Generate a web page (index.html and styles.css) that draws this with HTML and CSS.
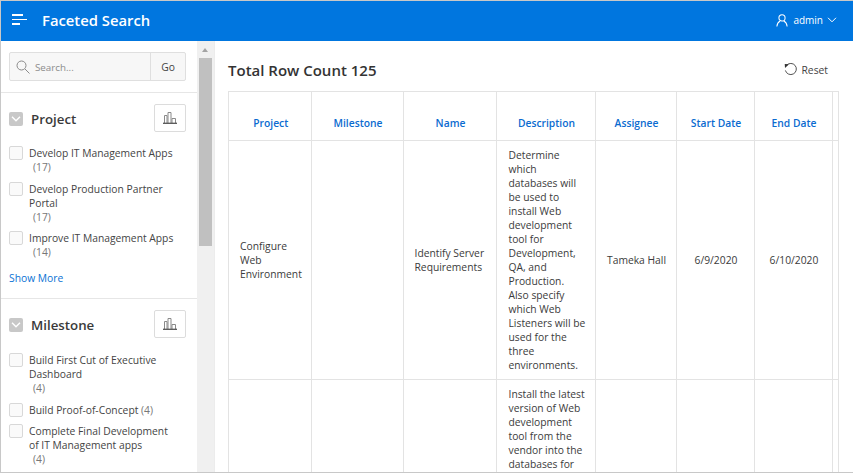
FILE: index.html
```html
<!DOCTYPE html>
<html lang="en">
<head>
<meta charset="utf-8">
<title>Faceted Search</title>
<link rel="stylesheet" href="styles.css">
</head>
<body>
<div class="frame">
  <header class="topbar">
    <svg class="menu-icon" width="16" height="12" viewBox="0 0 16 12" fill="none" stroke="#fff"><path d="M0 1h11M0 10h8" stroke-width="2"/><path d="M0 5.500h15" stroke-width="1"/></svg>
    <div class="app-title">Faceted Search</div>
    <div class="user">
      <svg width="12" height="13" viewBox="0 0 14 15" fill="none" stroke="#fff" stroke-width="1.200"><circle cx="7" cy="4.500" r="3.600"/><path d="M1 14.500c.3-3.500 2-5.500 3.800-6.400M13 14.500c-.3-3.500-2-5.500-3.800-6.400"/></svg>
      <span class="user-name">admin</span>
      <svg width="10" height="6" viewBox="0 0 10 6" fill="none" stroke="#fff" stroke-width="1"><path d="M1 .8l4 4 4-4"/></svg>
    </div>
  </header>
  <div class="body">
    <aside class="sidebar">
      <div class="search-wrap">
        <div class="search">
          <div class="search-field">
            <svg width="14" height="14" viewBox="0 0 14 14" fill="none" stroke="#8a8a8a" stroke-width="1"><circle cx="5.500" cy="5.500" r="4.500"/><path d="M9 9l4.500 4.500"/></svg>
            <span class="placeholder">Search...</span>
          </div>
          <div class="go">Go</div>
        </div>
      </div>
      <section class="facet">
        <div class="facet-head">
          <span class="collapse"><svg width="10" height="6" viewBox="0 0 10 6" fill="none" stroke="#fff" stroke-width="1.400"><path d="M1 .8l4 4 4-4"/></svg></span>
          <h2 class="facet-title">Project</h2>
          <span class="chart-btn"><svg width="14" height="12" viewBox="0 0 14 12" fill="none" stroke="#8a8a8a" stroke-width="1"><path d="M1.500 11V3.500h2.500V11M5 11V.5h3V11M9 11V6.500h3.500V11"/><path d="M0 11.300h14" stroke="#555" stroke-width="1.300"/></svg></span>
        </div>
        <ul class="options">
          <li class="option"><span class="box"></span><span class="label">Develop IT Management Apps <span class="count">(17)</span></span></li>
          <li class="option"><span class="box"></span><span class="label">Develop Production Partner Portal <span class="count">(17)</span></span></li>
          <li class="option"><span class="box"></span><span class="label">Improve IT Management Apps <span class="count">(14)</span></span></li>
        </ul>
        <a class="more">Show More</a>
      </section>
      <section class="facet">
        <div class="facet-head">
          <span class="collapse"><svg width="10" height="6" viewBox="0 0 10 6" fill="none" stroke="#fff" stroke-width="1.400"><path d="M1 .8l4 4 4-4"/></svg></span>
          <h2 class="facet-title">Milestone</h2>
          <span class="chart-btn"><svg width="14" height="12" viewBox="0 0 14 12" fill="none" stroke="#8a8a8a" stroke-width="1"><path d="M1.500 11V3.500h2.500V11M5 11V.5h3V11M9 11V6.500h3.500V11"/><path d="M0 11.300h14" stroke="#555" stroke-width="1.300"/></svg></span>
        </div>
        <ul class="options">
          <li class="option"><span class="box"></span><span class="label">Build First Cut of Executive Dashboard <span class="count">(4)</span></span></li>
          <li class="option"><span class="box"></span><span class="label">Build Proof-of-Concept <span class="count inline">(4)</span></span></li>
          <li class="option"><span class="box"></span><span class="label">Complete Final Development of IT Management apps <span class="count">(4)</span></span></li>
        </ul>
      </section>
    </aside>
    <div class="scrollbar">
      <div class="arrow"></div>
      <div class="thumb"></div>
    </div>
    <main class="main">
      <div class="main-head">
        <h1 class="total">Total Row Count 125</h1>
        <div class="reset">
          <svg width="13" height="13" viewBox="0 0 14 14" fill="none" stroke="#444" stroke-width="1"><path d="M2.700 2.600A6 6 0 1 1 1.500 8"/><path d="M.8 1.200l4.500 .2-4.200 4z" fill="#333" stroke="none"/></svg>
          <span>Reset</span>
        </div>
      </div>
      <div class="table-wrap">
        <table class="report">
          <colgroup>
            <col class="c1"><col class="c2"><col class="c3"><col class="c4"><col class="c5"><col class="c6"><col class="c7"><col class="c8">
          </colgroup>
          <thead>
            <tr><th>Project</th><th>Milestone</th><th>Name</th><th>Description</th><th>Assignee</th><th>Start Date</th><th>End Date</th><th></th></tr>
          </thead>
          <tbody>
            <tr>
              <td>Configure Web Environment</td>
              <td></td>
              <td>Identify Server Requirements</td>
              <td class="desc">Determine<br>which<br>databases will<br>be used to<br>install Web<br>development<br>tool for<br>Development,<br>QA, and<br>Production.<br>Also specify<br>which Web<br>Listeners will be<br>used for the<br>three<br>environments.</td>
              <td class="center">Tameka Hall</td>
              <td class="center">6/9/2020</td>
              <td class="center">6/10/2020</td>
              <td></td>
            </tr>
            <tr>
              <td></td><td></td><td></td>
              <td class="desc">Install the latest<br>version of Web<br>development<br>tool from the<br>vendor into the<br>databases for</td>
              <td></td><td></td><td></td><td></td>
            </tr>
          </tbody>
        </table>
      </div>
    </main>
  </div>
</div>
</body>
</html>
```
FILE: styles.css
```css
* { box-sizing: border-box; }
html, body { margin: 0; padding: 0; height: 100%; overflow: hidden; }
body { font-family: "Open Sans", "Noto Sans", sans-serif; font-size: 10.300px; color: #333; background: #fff; }
.frame { height: 473px; width: 853px; display: flex; flex-direction: column; border: 1px solid #c8c8c8; border-right: 0; }
.topbar { flex: none; height: 40px; background: #0076df; color: #fff; display: flex; align-items: center; padding: 0 16px 0 11px; }
.menu-icon { flex: none; margin-top: -3px; }
.app-title { font-size: 14.800px; font-weight: 600; margin-left: 14px; margin-top: -2px; }
.user { margin-left: auto; display: flex; align-items: center; gap: 4px; margin-top: -2px; }
.user-name { font-size: 10px; margin-left: 1px; }
.body { flex: 1; display: flex; min-height: 0; }
.sidebar { flex: none; width: 196px; overflow: hidden; background: #fff; }
.search-wrap { padding: 11px 11px 11px 8px; border-bottom: 1px solid #e6e6e6; }
.search { display: flex; height: 29px; border: 1px solid #dfdfdf; border-radius: 2px; background: #f7f7f7; }
.search-field { flex: 1; display: flex; align-items: center; gap: 5px; padding-left: 6px; }
.placeholder { color: #8c8c8c; font-size: 9.800px; margin-top: 1px; }
.go { width: 35px; border-left: 1px solid #dfdfdf; display: flex; align-items: center; justify-content: center; font-size: 10.300px; color: #444; }
.facet { padding: 11px 11px 13px 8px; border-bottom: 1px solid #e6e6e6; }
.facet:last-child { border-bottom: 0; }
.facet-head { display: flex; align-items: center; height: 29px; }
.collapse { width: 14px; height: 14px; border-radius: 2px; background: #c8c8c8; display: flex; align-items: center; justify-content: center; flex: none; }
.facet-title { margin: 0 0 0 8px; font-size: 13.300px; font-weight: 600; color: #3a3a3a; flex: 1; }
.chart-btn { width: 32px; height: 28px; align-self: flex-start; border: 1px solid #dcdcdc; border-radius: 2px; display: flex; align-items: center; justify-content: center; flex: none; }
.options { list-style: none; margin: 13px 0 0; padding: 0 8px 0 0; display: flex; flex-direction: column; gap: 7.500px; }
.facet:last-child .options { margin-top: 14px; }
.option { display: flex; gap: 6px; line-height: 14px; }
.box { width: 14px; height: 14px; border: 1px solid #d8d8d8; border-radius: 2px; background: #fafafa; flex: none; }
.label { color: #444; }
.count { display: block; color: #777; margin-left: 4px; }
.count.inline { display: inline; margin-left: 0; }
.more { display: block; margin-top: 12px; color: #0b72d4; line-height: 14px; }
.scrollbar { flex: none; width: 17px; background: #f0f0f0; display: flex; flex-direction: column; }
.arrow { height: 17px; position: relative; }
.arrow::before { content: ""; position: absolute; left: 5px; top: 7px; border: 3.500px solid transparent; border-top: 0; border-bottom: 4px solid #a3a3a3; }
.thumb { height: 188px; margin: 0 2px; background: #c0c0c0; }
.main { flex: 1; min-width: 0; background: #fff; border-left: 1px solid #ececec; padding: 0 14px 0 13px; display: flex; flex-direction: column; overflow: hidden; }
.main-head { flex: none; height: 50px; display: flex; align-items: center; justify-content: space-between; padding-top: 9px; }
.total { margin: -2px 0 0; font-size: 15px; font-weight: 600; color: #333; }
.reset { display: flex; align-items: center; gap: 5px; color: #444; margin: -2px 11px 0 0; }
.table-wrap { flex: 1; overflow: hidden; border: 1px solid #e3e3e3; border-bottom: 0; }
.report { table-layout: fixed; border-collapse: collapse; width: 609px; }
.c1 { width: 82px; } .c2 { width: 92px; } .c3 { width: 93px; } .c4 { width: 99px; } .c5 { width: 81px; } .c6 { width: 78px; } .c7 { width: 78px; } .c8 { width: 6px; }
.report th, .report td { border: 1px solid #e3e3e3; }
.report tr > :first-child { border-left: 0; }
.report tr > :last-child { border-right: 0; }
.report thead tr > th { border-top: 0; }
.report th { height: 48px; vertical-align: bottom; padding: 0 0 10px 2px; font-weight: 600; color: #0b6bd0; text-align: center; }
.report td { padding: 7px 11px; line-height: 14px; color: #3b3b3b; vertical-align: middle; }
.report td.desc { padding-left: 12px; padding-right: 4px; white-space: nowrap; }
.report td.center { text-align: center; padding: 7px 4px 7px 6px; }
```
